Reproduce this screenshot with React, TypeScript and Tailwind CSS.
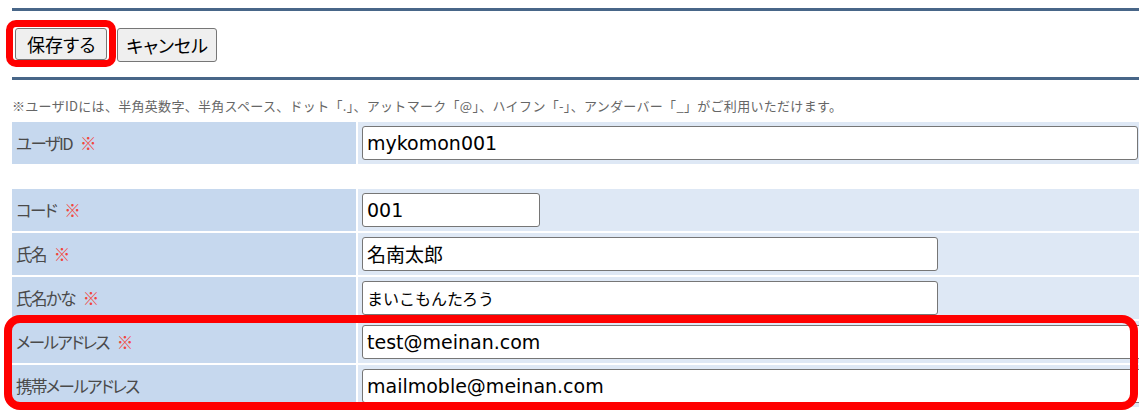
import React from 'react';

interface Field {
  label: string;
  required: boolean;
  value: string;
  inputClass: string;
  textClass?: string;
}

const jp = { fontFamily: '"Noto Sans CJK JP", "DejaVu Sans", sans-serif' };
const latin = { fontFamily: '"DejaVu Sans", "Noto Sans CJK JP", sans-serif' };

const fields: Field[] = [
  { label: 'コード', required: true, value: '001', inputClass: 'w-[178px]' },
  { label: '氏名', required: true, value: '名南太郎', inputClass: 'w-[576px]' },
  { label: '氏名かな', required: true, value: 'まいこもんたろう', inputClass: 'w-[576px]', textClass: 'text-[16px]' },
  { label: 'メールアドレス', required: true, value: 'test@meinan.com', inputClass: 'w-[800px]' },
  { label: '携帯メールアドレス', required: false, value: 'mailmoble@meinan.com', inputClass: 'w-[800px]' },
];

const Label: React.FC<{ text: string; required: boolean }> = ({ text, required }) => (
  <div
    className="w-[344px] shrink-0 bg-[#c6d8ee] flex items-center pl-[4px] text-[16.5px] tracking-[-1.6px] text-[#4a4a4a] [font-feature-settings:'palt']"
    style={jp}
  >
    {text}
    {required && <span className="ml-[8px] tracking-normal text-[#f2463c]">※</span>}
  </div>
);

const Row: React.FC<{ field: Field }> = ({ field }) => (
  <div className="flex gap-[2px] h-[42px]">
    <Label text={field.label} required={field.required} />
    <div className="flex-1 bg-[#dee8f5] flex items-center pl-[4px] overflow-hidden">
      <div
        className={`${field.inputClass} shrink-0 h-[34px] bg-white border border-[#767676] rounded-[3px] flex items-center pl-[4px] text-black ${field.textClass ?? 'text-[19px]'}`}
        style={/^[\x00-\x7f]+$/.test(field.value) ? latin : jp}
      >
        {field.value}
      </div>
    </div>
  </div>
);

const App: React.FC = () => {
  return (
    <div className="relative w-[1139px] h-[411px] overflow-hidden bg-white">
      {/* Top rule */}
      <div className="ml-[12px] mt-[8px] h-[3px] bg-[#486688]"></div>

      {/* Buttons */}
      <div className="flex gap-[10px] pl-[15px] mt-[17px] [font-feature-settings:'palt']" style={jp}>
        <button className="h-[32px] px-[11px] bg-[#efefef] border border-[#767676] rounded-[3px] text-[18px] text-black leading-none">
          保存する
        </button>
        <button className="h-[34px] px-[8px] bg-[#efefef] border border-[#767676] rounded-[3px] text-[18px] text-black leading-none">
          キャンセル
        </button>
      </div>

      {/* Second rule */}
      <div className="ml-[12px] mt-[15px] h-[3px] bg-[#486688]"></div>

      {/* Note */}
      <p className="ml-[12px] mt-[16px] text-[13px] leading-[20px] tracking-[0.3px] text-[#666666]" style={jp}>
        ※ユーザIDには、半角英数字、半角スペース、ドット「.」、アットマーク「@」、ハイフン「-」、アンダーバー「_」がご利用いただけます。
      </p>

      {/* Form table */}
      <div className="ml-[12px] mt-[6px] flex flex-col">
        <div className="flex gap-[2px] h-[42px]">
          <Label text="ユーザID" required />
          <div className="flex-1 bg-[#dee8f5] flex items-center pl-[4px] pr-[1px]">
            <div className="w-full h-[34px] bg-white border border-[#767676] rounded-[3px] flex items-center pl-[4px] text-[19px] text-black" style={latin}>
              mykomon001
            </div>
          </div>
        </div>

        <div className="h-[25px]"></div>

        <div className="flex flex-col gap-[2px]">
          {fields.map(f => (
            <Row key={f.label} field={f} />
          ))}
        </div>
      </div>

      {/* Red highlight frames */}
      <div className="absolute left-[6px] top-[20px] w-[110px] h-[47px] border-[7px] border-[#ff0000] rounded-[10px]"></div>
      <div className="absolute left-[4px] top-[315px] w-[1134px] h-[95px] border-[8px] border-[#ff0000] rounded-[16px]"></div>
    </div>
  );
};

export default App;
